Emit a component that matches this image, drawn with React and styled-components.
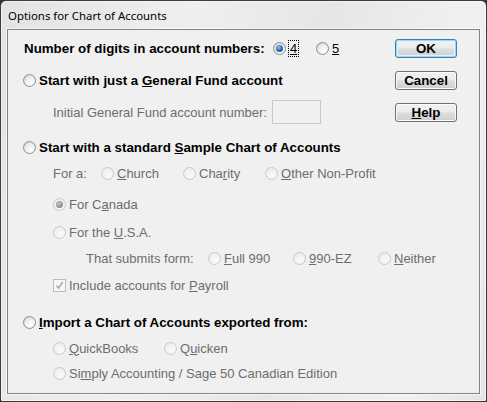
import React from "react";
import styled, {createGlobalStyle, css} from "styled-components";

const GlobalStyle = createGlobalStyle`
  html, body {
    margin: 0;
    padding: 0;
    background: #22324a;
  }
`;

const Window = styled.div`
  box-sizing: border-box;
  width: 487px;
  height: 402px;
  display: flex;
  flex-direction: column;
  border: 1px solid #3b3b3b;
  border-radius: 6px 6px 2px 2px;
  background: linear-gradient(100deg, #e3e3e3 0%, #efefef 35%, #e6e6e6 60%, #f1f1f1 85%, #e4e4e4 100%);
  box-shadow: inset 0 0 0 1px rgba(255, 255, 255, 0.55);
`;

const TitleBar = styled.div`
  height: 28px;
  flex: none;
  display: flex;
  align-items: center;
  padding: 1px 0 0 7px;
  box-sizing: border-box;
  font-family: "Noto Sans", "DejaVu Sans", sans-serif;
  font-size: 11.4px;
  color: #000;
`;

const Client = styled.div`
  flex: 1;
  margin: 0 6px 7px 6px;
  border: 1px solid #838383;
  box-shadow: 0 0 0 1px rgba(255, 255, 255, 0.6);
  background: #f0f0f0;
  font-family: "Liberation Sans", Arial, sans-serif;
  font-size: 13px;
  color: #000;
  padding-left: 15px;
`;

const TopSection = styled.div`
  display: flex;
`;

const Options = styled.div`
  flex: 1;
`;

const ButtonColumn = styled.div`
  width: 62px;
  flex: none;
  margin-right: 22px;
  padding-top: 9px;
  display: flex;
  flex-direction: column;
  gap: 13px;
`;

const Button = styled.button`
  box-sizing: border-box;
  height: 19px;
  width: 62px;
  padding: 0;
  border: 1px solid #707070;
  border-radius: 3px;
  font-family: "Liberation Sans", Arial, sans-serif;
  font-size: 13.33px;
  font-weight: bold;
  line-height: 15px;
  color: #000;
  background: linear-gradient(#f2f2f2 0%, #ebebeb 48%, #dddddd 52%, #cfcfcf 100%);
  box-shadow: inset 0 0 0 1px #fbfbfb;
  ${p => p.$default && css`
    border-color: #3c7fb1;
    box-shadow: inset 0 0 0 1px #9bd6f7, inset 0 0 0 2px #e3f3fc;
  `}
`;

const Row = styled.div`
  display: flex;
  align-items: center;
  height: 24px;
  margin-top: ${p => p.$top}px;
  padding-left: ${p => p.$indent || 0}px;
  white-space: nowrap;
`;

const Cell = styled.div`
  display: flex;
  align-items: center;
  flex: none;
  width: ${p => (p.$w ? `${p.$w}px` : "auto")};
`;

const Text = styled.span`
  font-weight: ${p => (p.$bold ? "bold" : "normal")};
  font-size: ${p => (p.$bold ? "13.33px" : "13px")};
  color: ${p => (p.$disabled ? "#6d6d6d" : "#000")};
  ${p => p.$focus && css`
    display: inline-block;
    line-height: 15px;
    padding: 1px 2px;
    margin-left: -1px;
    outline: 1px dotted #000;
    outline-offset: -1px;
  `}
`;

const Radio = styled.span`
  box-sizing: border-box;
  width: 13px;
  height: 13px;
  flex: none;
  margin-right: 3px;
  border-radius: 50%;
  position: relative;
  border: 1px solid ${p => (p.$disabled ? "#c9c9c9" : "#8e8f8f")};
  background: ${p =>
    p.$disabled
      ? "radial-gradient(circle at 65% 70%, #fafafa 0%, #f1f1f1 55%, #e4e4e4 100%)"
      : "radial-gradient(circle at 65% 70%, #ffffff 0%, #eeeeee 50%, #c4c4c4 100%)"};

  ${p => p.$checked && css`
    &::after {
      content: "";
      position: absolute;
      left: 2px;
      top: 2px;
      width: 7px;
      height: 7px;
      border-radius: 50%;
      background: ${p.$disabled
        ? "radial-gradient(circle at 40% 35%, #c4c4c4 0%, #8c8c8c 70%, #7a7a7a 100%)"
        : "radial-gradient(circle at 40% 35%, #8fc1f0 0%, #2466b5 55%, #0f3f7c 100%)"};
    }
  `}
`;

const CheckBox = styled.span`
  box-sizing: border-box;
  width: 13px;
  height: 13px;
  flex: none;
  margin-right: 3px;
  border: 1px solid #bcbcbc;
  background: #f6f6f6;
  display: flex;
  align-items: center;
  justify-content: center;
`;

const NumberInput = styled.div`
  box-sizing: border-box;
  width: 49px;
  height: 24px;
  border: 1px solid #c8c8c8;
  background: #f0f0f0;
`;

const Choice = ({w, checked, disabled, bold, focus, children}) => (
  <Cell $w={w}>
    <Radio $checked={checked} $disabled={disabled} />
    <Text $bold={bold} $disabled={disabled} $focus={focus}>
      {children}
    </Text>
  </Cell>
);

export default function App() {
  return (
    <>
      <GlobalStyle />
      <Window>
        <TitleBar>Options for Chart of Accounts</TitleBar>
        <Client>
          <TopSection>
            <Options>
              <Row $top={6} $indent={1}>
                <Cell $w={249}>
                  <Text $bold>Number of digits in account numbers:</Text>
                </Cell>
                <Choice w={43} checked focus>
                  <u>4</u>
                </Choice>
                <Choice>
                  <u>5</u>
                </Choice>
              </Row>
              <Row $top={8}>
                <Choice bold>
                  Start with just a <u>G</u>eneral Fund account
                </Choice>
              </Row>
              <Row $top={8} $indent={30}>
                <Cell $w={219}>
                  <Text $disabled>Initial General Fund account number:</Text>
                </Cell>
                <NumberInput />
              </Row>
            </Options>
            <ButtonColumn>
              <Button $default>OK</Button>
              <Button>Cancel</Button>
              <Button>
                <u>H</u>elp
              </Button>
            </ButtonColumn>
          </TopSection>

          <Row $top={11}>
            <Choice bold>
              Start with a standard <u>S</u>ample Chart of Accounts
            </Choice>
          </Row>
          <Row $top={2} $indent={30}>
            <Cell $w={48}>
              <Text $disabled>For a:</Text>
            </Cell>
            <Choice w={82} disabled>
              <u>C</u>hurch
            </Choice>
            <Choice w={82} disabled>
              Cha<u>r</u>ity
            </Choice>
            <Choice disabled>
              <u>O</u>ther Non-Profit
            </Choice>
          </Row>
          <Row $top={7} $indent={30}>
            <Choice disabled checked>
              For C<u>a</u>nada
            </Choice>
          </Row>
          <Row $top={4} $indent={30}>
            <Choice disabled>
              For the <u>U</u>.S.A.
            </Choice>
          </Row>
          <Row $top={2} $indent={63}>
            <Cell $w={122}>
              <Text $disabled>That submits form:</Text>
            </Cell>
            <Choice w={85} disabled>
              <u>F</u>ull 990
            </Choice>
            <Choice w={85} disabled>
              <u>9</u>90-EZ
            </Choice>
            <Choice disabled>
              <u>N</u>either
            </Choice>
          </Row>
          <Row $top={3} $indent={30}>
            <CheckBox>
              <svg width="9" height="9" viewBox="0 0 9 9">
                <polyline points="1.5,4.8 3.6,7.2 7.6,1.2" fill="none" stroke="#a3a3a3" strokeWidth="1.4" />
              </svg>
            </CheckBox>
            <Text $disabled>
              Include accounts for <u>P</u>ayroll
            </Text>
          </Row>
          <Row $top={13}>
            <Choice bold>
              <u>I</u>mport a Chart of Accounts exported from:
            </Choice>
          </Row>
          <Row $top={2} $indent={30}>
            <Choice w={111} disabled>
              <u>Q</u>uickBooks
            </Choice>
            <Choice disabled>
              Q<u>u</u>icken
            </Choice>
          </Row>
          <Row $top={1} $indent={30}>
            <Choice disabled>
              Si<u>m</u>ply Accounting / Sage 50 Canadian Edition
            </Choice>
          </Row>
        </Client>
      </Window>
    </>
  );
}
